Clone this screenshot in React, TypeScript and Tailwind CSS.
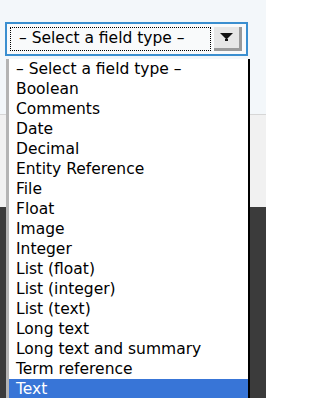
const fieldTypes = [
  '– Select a field type –',
  'Boolean',
  'Comments',
  'Date',
  'Decimal',
  'Entity Reference',
  'File',
  'Float',
  'Image',
  'Integer',
  'List (float)',
  'List (integer)',
  'List (text)',
  'Long text',
  'Long text and summary',
  'Term reference',
  'Text',
];

export default function App() {
  const selected = 'Text';

  return (
    <div
      className="relative w-[266px] h-[398px] overflow-hidden bg-[#3b3b3b] text-black"
      style={{ fontFamily: '"DejaVu Sans", "Liberation Sans", sans-serif' }}
    >
      {/* page behind the open menu */}
      <div className="w-full h-[114px] bg-[#f3f7fa] pt-[22px] pl-[5px]">
        <div className="w-[243px] h-[34px] border-2 border-[#3b8fd0] bg-[#f9fafb] flex items-center pl-[3px] pr-[4px] gap-[3px]">
          <div className="flex-1 h-[24px] border border-dotted border-black flex items-center pl-[8px] text-[15.5px] leading-none whitespace-nowrap">
            – Select a field type –
          </div>
          <div className="w-[28px] h-[24px] bg-[#e6e6e6] border-r-[3px] border-b-[3px] border-[#9a9a9a] flex items-center justify-center">
            <svg width="13" height="9" viewBox="0 0 13 9">
              <path d="M0 0h13L6.5 6.5z" fill="#111" />
              <rect x="5" y="6" width="3" height="2" fill="#111" />
            </svg>
          </div>
        </div>
      </div>
      <div className="w-full h-px bg-[#d6d6d6]" />
      <div className="w-full h-[92px] bg-[#f1f1f1]" />
      <div className="w-full h-[191px] bg-[#3b3b3b]" />

      {/* open dropdown list */}
      <div className="absolute left-[6px] top-[59px] w-[244px] border-l-[3px] border-[#b4b4b4] border-r-2 border-r-black bg-white">
        {fieldTypes.map((t) => (
          <div
            key={t}
            className={`h-[20px] pl-[7px] text-[15.5px] leading-[20px] whitespace-nowrap ${
              t === selected ? 'bg-[#3875d7] text-white' : ''
            }`}
          >
            {t}
          </div>
        ))}
      </div>
    </div>
  );
}
